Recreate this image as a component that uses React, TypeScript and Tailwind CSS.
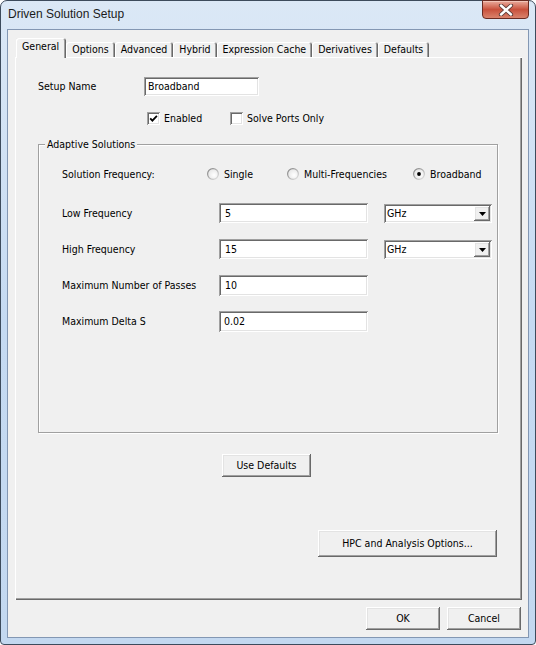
import React from "react";

// classic 3D edges
const raised =
  "shadow-[inset_-1px_-1px_0_#696969,inset_1px_1px_0_#ffffff,inset_-2px_-2px_0_#a0a0a0,inset_2px_2px_0_#e3e3e3]";
const sunken =
  "shadow-[inset_1px_1px_0_#a0a0a0,inset_-1px_-1px_0_#ffffff,inset_2px_2px_0_#696969,inset_-2px_-2px_0_#e3e3e3]";

const tabs = [
  "General",
  "Options",
  "Advanced",
  "Hybrid",
  "Expression Cache",
  "Derivatives",
  "Defaults",
];

const Button: React.FC<{ label: string; className: string }> = ({ label, className }) => (
  <button className={`flex items-center justify-center bg-[#f0f0f0] ${raised} ${className}`}>
    {label}
  </button>
);

const TextBox: React.FC<{ value: string; className: string }> = ({ value, className }) => (
  <div className={`flex items-center bg-white ${sunken} ${className}`}>{value}</div>
);

const Combo: React.FC<{ value: string }> = ({ value }) => (
  <div className={`flex items-center justify-between mt-[1px] h-[19px] w-[108px] bg-white pl-[3px] pr-[2px] ${sunken}`}>
    <span>{value}</span>
    <div className={`flex items-center justify-center w-[16px] h-[15px] bg-[#f0f0f0] ${raised}`}>
      <svg width="7" height="4" viewBox="0 0 7 4">
        <path d="M0 0h7L3.5 4z" fill="#000000" />
      </svg>
    </div>
  </div>
);

const CheckBox: React.FC<{ checked: boolean; label: string; className?: string }> = ({
  checked,
  label,
  className = "",
}) => (
  <div className={`flex items-center gap-[4px] ${className}`}>
    <div className={`flex items-center justify-center w-[13px] h-[13px] bg-white ${sunken}`}>
      {checked && (
        <svg width="13" height="13" viewBox="0 0 13 13">
          <path d="M3.2 6.3 L5.4 8.6 L9.9 3.9" stroke="#000000" strokeWidth="1.8" fill="none" />
        </svg>
      )}
    </div>
    <span>{label}</span>
  </div>
);

const Radio: React.FC<{ checked: boolean; label: string; className?: string }> = ({
  checked,
  label,
  className = "",
}) => (
  <div className={`flex items-center gap-[5px] ${className}`}>
    <svg width="12" height="12" viewBox="0 0 12 12">
      <defs>
        <linearGradient id="radioEdge" x1="0" y1="0" x2="1" y2="1">
          <stop offset="0" stopColor="#7c7c7c" />
          <stop offset="1" stopColor="#e4e4e4" />
        </linearGradient>
        <radialGradient id="radioFill" cx="0.6" cy="0.6" r="0.6">
          <stop offset="0" stopColor="#ffffff" />
          <stop offset="1" stopColor="#e6e6e6" />
        </radialGradient>
      </defs>
      <circle cx="6" cy="6" r="5.4" fill="url(#radioFill)" stroke="url(#radioEdge)" strokeWidth="1.2" />
      {checked && <circle cx="6" cy="6" r="1.9" fill="#000000" />}
    </svg>
    <span>{label}</span>
  </div>
);

export default function App() {
  return (
    <div className="w-[536px] h-[645px] font-['DejaVu_Sans_Condensed','Liberation_Sans',Arial,sans-serif] text-[10.5px] leading-[13px] text-black">
      <div className="flex flex-col h-full rounded-t-[7px] rounded-b-[4px] border border-[#3d4b5c] bg-gradient-to-b from-[#dbe8f6] via-[#c5daf2] to-[#c3d8f0]">
        {/* title bar */}
        <div className="flex h-[28px] shrink-0">
          <div className="flex items-center pl-[7px] pb-[1px] font-['Liberation_Sans',Arial,sans-serif] text-[12px] text-[#1b1b1b]">
            Driven Solution Setup
          </div>
          <div className="ml-auto mr-[6px] -mt-px flex items-center justify-center w-[47px] h-[19px] rounded-b-[4px] border border-[#6a2b22] bg-gradient-to-b from-[#e9ab9d] via-[#c8503c] to-[#d9826c] shadow-[inset_0_1px_0_#f2c4b8]">
            <svg width="16" height="12" viewBox="0 0 16 12">
              <path d="M3 1.5 L13 10.5 M13 1.5 L3 10.5" stroke="#5a3a36" strokeWidth="4.2" strokeLinecap="round" />
              <path d="M3 1.5 L13 10.5 M13 1.5 L3 10.5" stroke="#ffffff" strokeWidth="2.4" strokeLinecap="round" />
            </svg>
          </div>
        </div>

        {/* client area */}
        <div className="mx-[6px] w-[522px] h-[609px] border border-[#8397b3] bg-[#f0f0f0] pt-[8px] pl-[7px]">
          {/* tab strip */}
          <div className="flex items-end h-[19px] pl-[3px]">
            {tabs.map((t, i) =>
              i === 0 ? (
                <div
                  key={t}
                  className="relative z-10 -ml-[2px] -mb-px h-[20px] pl-[6px] pr-[7px] pt-[2px] rounded-t-[3px] bg-[#f0f0f0] shadow-[inset_1px_1px_0_#ffffff,inset_-1px_0_0_#696969,inset_-2px_0_0_#a0a0a0]"
                >
                  {t}
                </div>
              ) : (
                <div
                  key={t}
                  className="h-[15px] px-[6px] pt-[1px] rounded-t-[3px] shadow-[inset_1px_1px_0_#ffffff,inset_-1px_0_0_#696969,inset_-2px_0_0_#a0a0a0]"
                >
                  {t}
                </div>
              )
            )}
          </div>

          {/* tab page */}
          <div className="flex flex-col items-start w-[507px] h-[543px] pt-[20px] pl-[23px] bg-[#f0f0f0] shadow-[inset_1px_1px_0_#ffffff,inset_-1px_-1px_0_#696969,inset_-2px_-2px_0_#a0a0a0]">
            <div className="flex items-center h-[19px]">
              <div className="w-[106px]">Setup Name</div>
              <TextBox value="Broadband" className="w-[115px] h-[19px] pl-[4px]" />
            </div>

            <div className="flex items-center h-[13px] mt-[16px] ml-[109px]">
              <CheckBox checked label="Enabled" className="w-[83px]" />
              <CheckBox checked={false} label="Solve Ports Only" />
            </div>

            {/* group box */}
            <div className="relative mt-[19px] w-[460px] h-[289px] border border-[#a0a0a0] shadow-[inset_1px_1px_0_#ffffff,1px_1px_0_#ffffff] pt-[19px] pl-[23px]">
              <div className="absolute -top-[7px] left-[6px] px-[2px] h-[13px] bg-[#f0f0f0]">
                Adaptive Solutions
              </div>

              <div className="flex items-center h-[20px]">
                <div className="w-[145px]">Solution Frequency:</div>
                <Radio checked={false} label="Single" className="w-[80px]" />
                <Radio checked={false} label="Multi-Frequencies" className="w-[126px]" />
                <Radio checked label="Broadband" />
              </div>

              <div className="flex items-center h-[20px] mt-[19px]">
                <div className="w-[157px]">Low Frequency</div>
                <TextBox value="5" className="w-[149px] h-[20px] pl-[6px]" />
                <div className="ml-[16px]">
                  <Combo value="GHz" />
                </div>
              </div>

              <div className="flex items-center h-[20px] mt-[16px]">
                <div className="w-[157px]">High Frequency</div>
                <TextBox value="15" className="w-[149px] h-[20px] pl-[6px]" />
                <div className="ml-[16px]">
                  <Combo value="GHz" />
                </div>
              </div>

              <div className="flex items-center h-[20px] mt-[16px]">
                <div className="w-[157px]">Maximum Number of Passes</div>
                <TextBox value="10" className="w-[149px] h-[21px] pl-[6px]" />
              </div>

              <div className="flex items-center h-[20px] mt-[16px]">
                <div className="w-[157px]">Maximum Delta S</div>
                <TextBox value="0.02" className="w-[149px] h-[21px] pl-[5px]" />
              </div>
            </div>

            <Button label="Use Defaults" className="mt-[21px] ml-[184px] w-[89px] h-[23px]" />
            <Button label="HPC and Analysis Options..." className="mt-[53px] ml-[280px] w-[179px] h-[27px]" />
          </div>

          {/* dialog buttons */}
          <div className="flex justify-end gap-[7px] mt-[7px] pr-[7px] h-[23px]">
            <Button label="OK" className="w-[74px] h-[23px]" />
            <Button label="Cancel" className="w-[74px] h-[23px]" />
          </div>
        </div>
      </div>
    </div>
  );
}
